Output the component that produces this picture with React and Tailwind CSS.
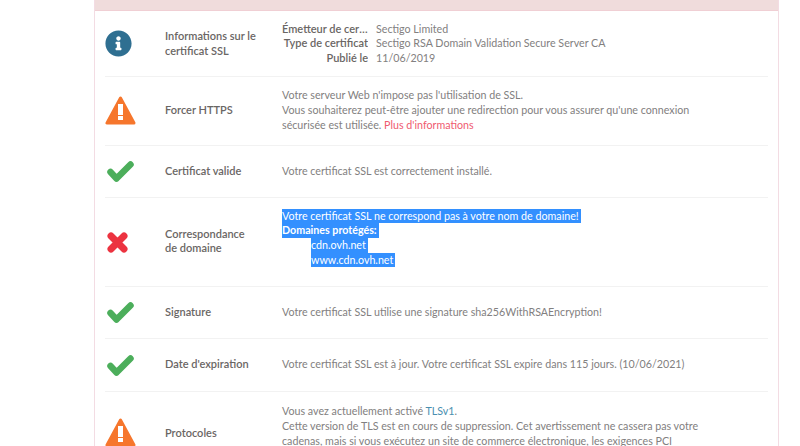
import { FaInfoCircle } from 'react-icons/fa';

function Row({ icon, label, height, labelClass = 'pb-[1px]', textClass = 'pb-[2px]', last, children }) {
  return (
    <div className={`flex items-center ${height} ${last ? '' : 'border-b border-[#f2f2f2]'}`}>
      <div className="w-[60px] shrink-0 flex items-center">{icon}</div>
      <div className={`w-[117px] shrink-0 pr-3 text-[11px] leading-[14.5px] font-semibold text-[#6a6664] ${labelClass}`}>{label}</div>
      <div className={`flex-1 min-w-0 text-[10.7px] leading-[15px] text-[#828080] ${textClass}`}>{children}</div>
    </div>
  );
}

function InfoRow({ term, children }) {
  return (
    <div className="flex h-[14.5px]">
      <div className="w-[86px] shrink-0 text-right truncate text-[11px] font-semibold text-[#6a6664]">{term}</div>
      <div className="ml-2">{children}</div>
    </div>
  );
}

function WarnIcon() {
  return (
    <svg className="mb-[2px]" width="31" height="29" viewBox="0 0 31 29">
      <path d="M15.5 2 L2 27 H29 Z" fill="#f6762c" stroke="#f6762c" strokeWidth="3" strokeLinejoin="round" />
      <rect x="13" y="8" width="5" height="11" fill="#fff" />
      <rect x="13" y="20" width="5" height="4" fill="#fff" />
    </svg>
  );
}

function CheckIcon() {
  return (
    <svg className="ml-[2px]" width="27" height="21" viewBox="0 0 27 21">
      <path d="M3.5 11 L9.5 17.5 L23.5 3.5" fill="none" stroke="#4cae5b" strokeWidth="6.5" strokeLinecap="round" strokeLinejoin="round" />
    </svg>
  );
}

function CrossIcon() {
  return (
    <svg className="ml-[2px]" width="21" height="21" viewBox="0 0 21 21">
      <path d="M4 4 L17 17 M17 4 L4 17" fill="none" stroke="#ec3340" strokeWidth="7" strokeLinecap="round" />
    </svg>
  );
}

const BAND = 'inline-block bg-[#3390ff] pr-[2px]';

export default function App() {
  return (
    <div className="h-[446px] overflow-hidden bg-white font-['Lato',sans-serif]">
      <div className="ml-[94px] w-[685px] h-[446px] border-x border-[#f3dce3]">
        <div className="h-[11px] bg-[#f0dcdc] border-b border-[#f0cfd4]" />
        <div className="px-[10px]">
          <Row label="Informations sur le certificat SSL" height="h-[66px]" labelClass=""
            icon={<FaInfoCircle className="text-[#2f6f91] text-[27px]" />}>
            <InfoRow term="Émetteur de certificat">Sectigo Limited</InfoRow>
            <InfoRow term="Type de certificat">Sectigo RSA Domain Validation Secure Server CA</InfoRow>
            <InfoRow term="Publié le">11/06/2019</InfoRow>
          </Row>
          <Row label="Forcer HTTPS" height="h-[69px]" labelClass="pb-[2px]" textClass="pb-[3px]" icon={<WarnIcon />}>
            Votre serveur Web n'impose pas l'utilisation de SSL.
            <br />
            Vous souhaiterez peut-être ajouter une redirection pour vous assurer qu'une connexion
            <br />
            sécurisée est utilisée. <span className="text-[#ef5a6f]">Plus d'informations</span>
          </Row>
          <Row label="Certificat valide" height="h-[52px]" labelClass="" icon={<CheckIcon />}>
            Votre certificat SSL est correctement installé.
          </Row>
          <Row label={<>Correspondance<br />de domaine</>} height="h-[89px]" labelClass="pb-[2px]" textClass="pb-[8px]" icon={<CrossIcon />}>
            <div className="text-white leading-[14.7px]">
              <div><span className={BAND}>Votre certificat SSL ne correspond pas à votre nom de domaine!</span></div>
              <div><span className={`${BAND} font-bold`}>Domaines protégés:</span></div>
              <div className="pl-[29px]"><span className={BAND}>cdn.ovh.net</span></div>
              <div className="pl-[29px]"><span className={BAND}>www.cdn.ovh.net</span></div>
            </div>
          </Row>
          <Row label="Signature" height="h-[52px]" labelClass="" icon={<CheckIcon />}>
            Votre certificat SSL utilise une signature sha256WithRSAEncryption!
          </Row>
          <Row label="Date d'expiration" height="h-[53px]" labelClass="pb-[2px]" textClass="pb-[3px]" icon={<CheckIcon />}>
            Votre certificat SSL est à jour. Votre certificat SSL expire dans 115 jours. (10/06/2021)
          </Row>
          <Row label="Protocoles" height="h-[83px]" labelClass="" textClass="self-start pt-[11px]" last icon={<WarnIcon />}>
            Vous avez actuellement activé <span className="text-[#4a8fb0]">TLSv1</span>.
            <br />
            Cette version de TLS est en cours de suppression. Cet avertissement ne cassera pas votre
            <br />
            cadenas, mais si vous exécutez un site de commerce électronique, les exigences PCI
          </Row>
        </div>
      </div>
    </div>
  );
}
